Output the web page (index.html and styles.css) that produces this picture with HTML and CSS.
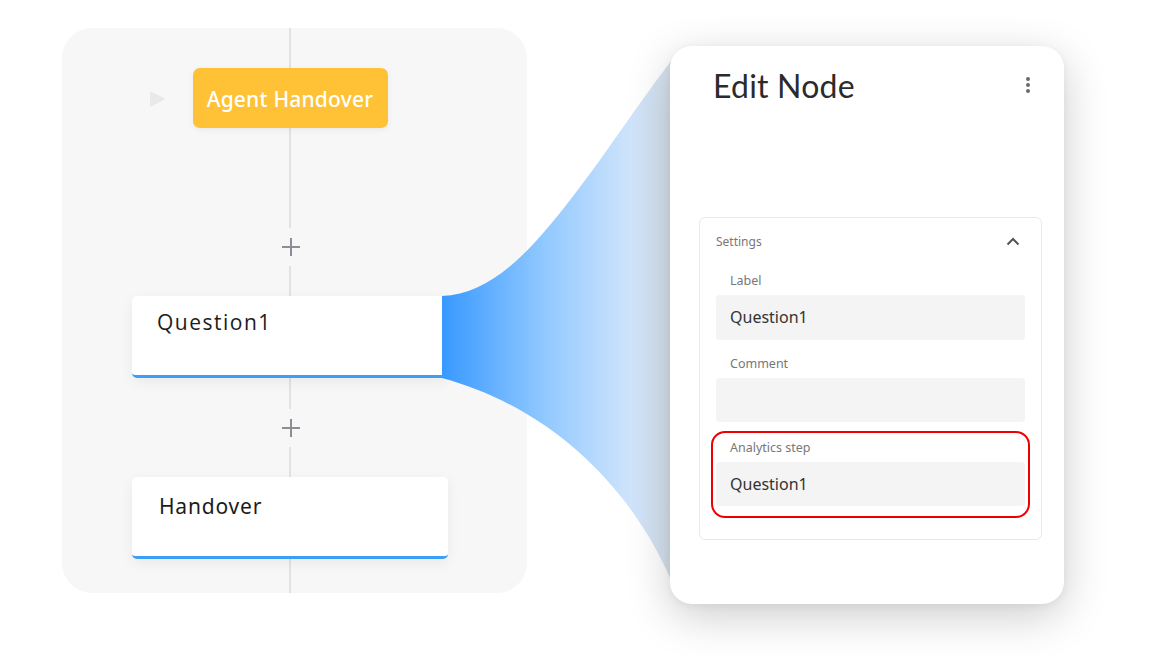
FILE: index.html
```html
<!DOCTYPE html>
<html lang="en">
<head>
<meta charset="utf-8">
<title>Edit Node</title>
<link rel="stylesheet" href="styles.css">
</head>
<body>
<div class="stage">
  <section class="flow">
    <div class="flow-col">
      <div class="start-row">
        <svg class="play" viewBox="0 0 18 18" width="18" height="18"><path d="M2 2.5 Q2 1 3.4 1.7 L16 8.1 Q17.3 9 16 9.9 L3.4 16.3 Q2 17 2 15.5 Z" fill="#e9e9e9"/></svg>
        <div class="start-node">Agent Handover</div>
        <span></span>
      </div>
      <div class="plus plus-first"><svg viewBox="0 0 20 20" width="20" height="20"><path d="M10 1 V19 M1 10 H19" stroke="#8d8d94" stroke-width="2"/></svg></div>
      <div class="node node-q"><span>Question1</span></div>
      <div class="plus"><svg viewBox="0 0 20 20" width="20" height="20"><path d="M10 1 V19 M1 10 H19" stroke="#8d8d94" stroke-width="2"/></svg></div>
      <div class="node node-h"><span>Handover</span></div>
    </div>
  </section>

  <svg class="funnel" viewBox="0 0 1173 657" width="1173" height="657">
    <defs>
      <linearGradient id="fg" x1="442" y1="0" x2="672" y2="0" gradientUnits="userSpaceOnUse">
        <stop offset="0" stop-color="#3899ff"/>
        <stop offset="0.45" stop-color="#92c9ff"/>
        <stop offset="0.82" stop-color="#cfe4fb"/>
        <stop offset="1" stop-color="#d8e2ec"/>
      </linearGradient>
    </defs>
    <path d="M442 296 C 500 294 545 235 600 160 C 630 118 650 88 675 56 L 675 590 C 640 500 560 410 442 378 Z" fill="url(#fg)"/>
  </svg>

  <section class="editor">
    <header class="editor-head">
      <h1>Edit Node</h1>
      <svg class="kebab" viewBox="0 0 6 18" width="6" height="18"><circle cx="3" cy="3" r="2" fill="#6b6b6b"/><circle cx="3" cy="9" r="2" fill="#6b6b6b"/><circle cx="3" cy="15" r="2" fill="#6b6b6b"/></svg>
    </header>
    <div class="settings">
      <div class="settings-head">
        <span>Settings</span>
        <svg viewBox="0 0 14 9" width="14" height="9"><path d="M1.5 7.5 L7 2 L12.5 7.5" fill="none" stroke="#555" stroke-width="2"/></svg>
      </div>
      <div class="field">
        <label>Label</label>
        <div class="input">Question1</div>
      </div>
      <div class="field field-gap">
        <label>Comment</label>
        <div class="input input-empty"></div>
      </div>
      <div class="field field-hl">
        <label>Analytics step</label>
        <div class="input">Question1</div>
      </div>
    </div>
  </section>
</div>
</body>
</html>
```

FILE: styles.css
```css
* { box-sizing: border-box; }
html, body { margin: 0; padding: 0; background: #ffffff; }
body { font-family: "Noto Sans", "Lato", sans-serif; }

.stage {
  position: relative;
  width: 1173px;
  height: 657px;
  display: flex;
  align-items: flex-start;
  padding-left: 62px;
  gap: 143px;
}

/* left flow panel */
.flow {
  margin-top: 28px;
  width: 465px;
  height: 565px;
  background: #f7f7f7;
  border-radius: 30px;
  padding-left: 70px;
}
.flow-col {
  width: 316px;
  height: 100%;
  display: flex;
  flex-direction: column;
  align-items: center;
  background: linear-gradient(#e2e2e4, #e2e2e4) no-repeat 157px 0 / 2px 100%;
}
.start-row {
  margin-top: 40px;
  width: 100%;
  display: grid;
  grid-template-columns: 1fr auto 1fr;
  align-items: center;
}
.play { justify-self: end; margin-right: 27px; margin-top: 1px; }
.start-node {
  width: 195px;
  height: 60px;
  background: #ffc236;
  border-radius: 7px;
  color: #ffffff;
  font-size: 21px;
  font-weight: 500;
  letter-spacing: 0.2px;
  padding-top: 2px;
  display: flex;
  align-items: center;
  justify-content: center;
  box-shadow: 0 2px 6px rgba(0,0,0,0.06);
}
.plus {
  height: 38px;
  width: 30px;
  margin-top: 31px;
  background: #f7f7f7;
  display: flex;
  align-items: center;
  justify-content: center;
  margin-left: 2px;
}
.plus-first { margin-top: 100px; }
.node {
  margin-top: 30px;
  width: 316px;
  height: 82px;
  background: #ffffff;
  border-radius: 5px;
  border-bottom: 3px solid #3d9ef6;
  box-shadow: 0 4px 14px rgba(0,0,0,0.06);
  padding: 12px 25px 0;
  font-size: 21px;
  color: #1c1c1c;
  align-self: flex-start;
}
.node-q { font-family: "Open Sans", sans-serif; letter-spacing: 1.5px; }
.node-h { padding-left: 27px; padding-top: 15px; letter-spacing: 0.8px; }

/* connector */
.funnel {
  position: absolute;
  left: 0;
  top: 0;
  z-index: 1;
  pointer-events: none;
}

/* right editor card */
.editor {
  position: relative;
  z-index: 2;
  margin-top: 46px;
  width: 394px;
  height: 558px;
  background: #ffffff;
  border-radius: 22px;
  box-shadow: 0 12px 45px rgba(0,0,0,0.2), 0 2px 8px rgba(0,0,0,0.05);
  padding: 20px 22px 0 29px;
}
.editor-head {
  display: flex;
  justify-content: space-between;
  align-items: center;
  padding-left: 14px;
  padding-right: 11px;
}
.editor-head h1 {
  margin: 0;
  font-family: "Lato", sans-serif;
  font-size: 32px;
  line-height: 40px;
  font-weight: 400;
  color: #2b2b2b;
  letter-spacing: 0.2px;
}
.kebab { margin-top: -2px; }

.settings {
  margin-top: 111px;
  border: 1px solid #e9e9e9;
  border-radius: 6px;
  padding: 0 16px 21px 16px;
}
.settings-head {
  height: 47px;
  display: flex;
  align-items: center;
  justify-content: space-between;
  font-size: 12px;
  color: #777;
  padding-right: 5px;
}
.field label {
  display: block;
  padding-left: 14px;
  font-size: 12.5px;
  line-height: 15px;
  color: #777;
  margin-top: 8px;
  margin-bottom: 7px;
}
.field-gap label { margin-top: 16px; }
.input {
  height: 45px;
  background: #f4f4f4;
  border-radius: 4px;
  padding-left: 14px;
  padding-bottom: 1px;
  display: flex;
  align-items: center;
  font-size: 16px;
  color: #333;
}
.input-empty { height: 44px; }
.field-hl {
  margin: 9px -5px 0;
  border: 2px solid #ee0000;
  border-radius: 14px;
  padding: 0 3px 10px;
}
.field-hl label { margin-top: 7px; }
.field-hl .input { height: 44px; }
```
